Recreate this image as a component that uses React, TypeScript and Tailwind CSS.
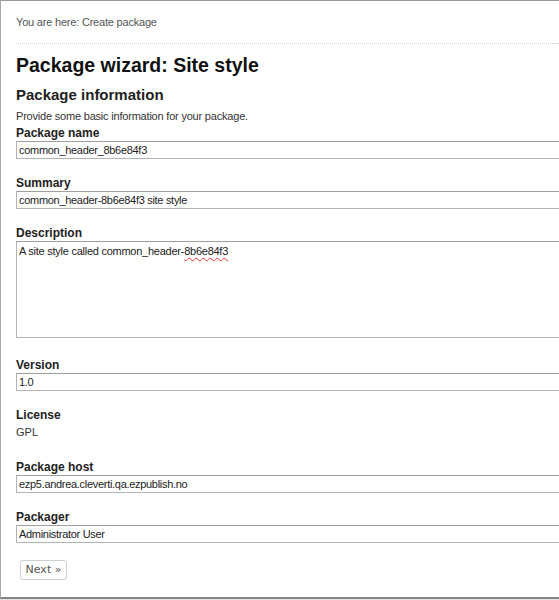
import React from "react";

const font = { fontFamily: '"Liberation Sans", Arial, sans-serif' };

function Field({ label, value, mt }: { label: string; value: string; mt: string }) {
  return (
    <div className={mt}>
      <div className="text-[12px] leading-[15px] font-bold text-[#222]">{label}</div>
      <div className="h-[18px] w-[600px] border border-[#b4b4b4] border-t-[#a0a0a0] bg-white pl-[2px] text-[11px] leading-[16px] tracking-[-0.3px] text-[#222]">
        {value}
      </div>
    </div>
  );
}

export default function App() {
  return (
    <div className="w-[559px] h-[600px] overflow-hidden bg-white" style={font}>
      <div className="box-border h-[599px] border-l border-t border-b-2 border-l-[#a8a8a8] border-t-[#9a9a9a] border-b-[#858585] pl-[15px] pt-[14px] overflow-hidden">
        <div className="text-[11px] leading-[15px] tracking-[-0.2px] text-[#555]">You are here: Create package</div>
        <div className="mt-[13px] border-t border-dotted border-[#d0d0d0]" />
        <h1 className="mt-[9px] text-[19.5px] leading-[24px] font-bold text-[#111]">Package wizard: Site style</h1>
        <h2 className="mt-[8px] text-[15px] leading-[20px] font-bold text-[#222]">Package information</h2>
        <p className="mt-[4px] text-[11px] leading-[15px] tracking-[-0.2px] text-[#333]">Provide some basic information for your package.</p>

        <Field mt="mt-[2px]" label="Package name" value="common_header_8b6e84f3" />
        <Field mt="mt-[17px]" label="Summary" value="common_header-8b6e84f3 site style" />

        <div className="mt-[17px]">
          <div className="text-[12px] leading-[15px] font-bold text-[#222]">Description</div>
          <div className="h-[97px] w-[600px] border border-[#b4b4b4] border-t-[#a0a0a0] bg-white pl-[2px] pt-[1px] text-[11px] leading-[16px] tracking-[-0.25px] text-[#222]">
            A site style called common_header-
            <span className="underline decoration-wavy decoration-[#e03030] decoration-1 underline-offset-2">8b6e84f3</span>
          </div>
        </div>

        <Field mt="mt-[20px]" label="Version" value="1.0" />

        <div className="mt-[17px]">
          <div className="text-[12px] leading-[15px] font-bold text-[#222]">License</div>
          <div className="mt-[2px] text-[11px] leading-[15px] text-[#333]">GPL</div>
        </div>

        <Field mt="mt-[20px]" label="Package host" value="ezp5.andrea.cleverti.qa.ezpublish.no" />
        <Field mt="mt-[17px]" label="Packager" value="Administrator User" />

        <div className="mt-[17px] ml-[4px]">
          <div
            className="flex h-[20px] w-[47px] items-center justify-center rounded-[3px] border border-[#cfcfcf] bg-white text-[11px] text-[#555]"
            style={{ fontFamily: '"DejaVu Sans", Verdana, sans-serif' }}
          >
            Next »
          </div>
        </div>
      </div>
      <div className="h-[1px] bg-[#e2e2e2]" />
    </div>
  );
}
